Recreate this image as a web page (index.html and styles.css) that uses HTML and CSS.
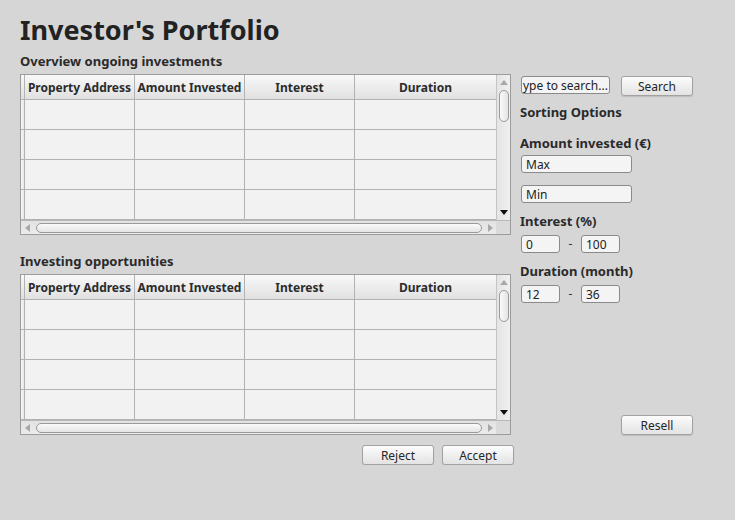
FILE: index.html
```
<!DOCTYPE html>
<html>
<head>
<meta charset="utf-8">
<link rel="stylesheet" href="styles.css">
</head>
<body>
<div class="page">
  <h1 class="title">Investor's Portfolio</h1>
  <div class="main">
    <div class="left">
      <div class="label">Overview ongoing investments</div>
      <div class="table">
        <div class="tbl-main">
          <div class="grid">
            <div class="rh head"></div><div class="hc">Property Address</div><div class="hc">Amount Invested</div><div class="hc">Interest</div><div class="hc last">Duration</div>
            <div class="rh"></div><div class="c"></div><div class="c"></div><div class="c"></div><div class="c last"></div>
            <div class="rh"></div><div class="c"></div><div class="c"></div><div class="c"></div><div class="c last"></div>
            <div class="rh"></div><div class="c"></div><div class="c"></div><div class="c"></div><div class="c last"></div>
            <div class="rh"></div><div class="c"></div><div class="c"></div><div class="c"></div><div class="c last"></div>
          </div>
          <div class="vscroll">
            <svg class="arr-up" width="8" height="5" viewBox="0 0 8 5"><polygon points="4,0 8,5 0,5" fill="#a8a8a8"/></svg>
            <div class="vhandle"></div>
            <svg class="arr-down" width="8" height="5" viewBox="0 0 8 5"><polygon points="0,0 8,0 4,5" fill="#111"/></svg>
          </div>
        </div>
        <div class="tbl-bottom">
          <div class="hscroll">
            <svg class="arr-left" width="5" height="8" viewBox="0 0 5 8"><polygon points="5,0 5,8 0,4" fill="#a8a8a8"/></svg>
            <div class="hhandle"></div>
            <svg class="arr-right" width="5" height="8" viewBox="0 0 5 8"><polygon points="0,0 5,4 0,8" fill="#a8a8a8"/></svg>
          </div>
          <div class="corner"></div>
        </div>
      </div>

      <div class="label label2">Investing opportunities</div>
      <div class="table">
        <div class="tbl-main">
          <div class="grid">
            <div class="rh head"></div><div class="hc">Property Address</div><div class="hc">Amount Invested</div><div class="hc">Interest</div><div class="hc last">Duration</div>
            <div class="rh"></div><div class="c"></div><div class="c"></div><div class="c"></div><div class="c last"></div>
            <div class="rh"></div><div class="c"></div><div class="c"></div><div class="c"></div><div class="c last"></div>
            <div class="rh"></div><div class="c"></div><div class="c"></div><div class="c"></div><div class="c last"></div>
            <div class="rh"></div><div class="c"></div><div class="c"></div><div class="c"></div><div class="c last"></div>
          </div>
          <div class="vscroll">
            <svg class="arr-up" width="8" height="5" viewBox="0 0 8 5"><polygon points="4,0 8,5 0,5" fill="#a8a8a8"/></svg>
            <div class="vhandle"></div>
            <svg class="arr-down" width="8" height="5" viewBox="0 0 8 5"><polygon points="0,0 8,0 4,5" fill="#111"/></svg>
          </div>
        </div>
        <div class="tbl-bottom">
          <div class="hscroll">
            <svg class="arr-left" width="5" height="8" viewBox="0 0 5 8"><polygon points="5,0 5,8 0,4" fill="#a8a8a8"/></svg>
            <div class="hhandle"></div>
            <svg class="arr-right" width="5" height="8" viewBox="0 0 5 8"><polygon points="0,0 5,4 0,8" fill="#a8a8a8"/></svg>
          </div>
          <div class="corner"></div>
        </div>
      </div>

      <div class="btn-row">
        <div class="btn">Reject</div>
        <div class="btn">Accept</div>
      </div>
    </div>

    <div class="right">
      <div class="search-row">
        <div class="field search-field">ype to search...</div>
        <div class="btn">Search</div>
      </div>
      <div class="label sort-title">Sorting Options</div>
      <div class="label amount-label">Amount invested (€)</div>
      <div class="field wide f-max">Max</div>
      <div class="field wide f-min">Min</div>
      <div class="label range-label">Interest (%)</div>
      <div class="range-row">
        <div class="field small">0</div>
        <span class="dash">-</span>
        <div class="field small">100</div>
      </div>
      <div class="label range-label">Duration (month)</div>
      <div class="range-row">
        <div class="field small">12</div>
        <span class="dash">-</span>
        <div class="field small">36</div>
      </div>
      <div class="btn resell">Resell</div>
    </div>
  </div>
</div>
</body>
</html>
```

FILE: styles.css
```
* { box-sizing: border-box; }

body {
  margin: 0;
  background: #d6d6d6;
  font-family: "Noto Sans", "Open Sans", sans-serif;
  color: #262626;
}

.page {
  padding: 12px 20px 0 20px;
}

.title {
  margin: 0;
  font-size: 27px;
  line-height: 36px;
  font-weight: 700;
  color: #222;
}

.main {
  display: flex;
  margin-top: 4px;
}

.left {
  width: 491px;
  display: flex;
  flex-direction: column;
}

.label {
  font-size: 13px;
  line-height: 19px;
  font-weight: 700;
  color: #2a2a2a;
  white-space: nowrap;
}

.label2 { margin-top: 17px; }

.table {
  margin-top: 3px;
  width: 491px;
  height: 161px;
  border: 1px solid #9c9c9c;
  background: #f2f2f2;
  display: flex;
  flex-direction: column;
}

.tbl-main {
  display: flex;
  height: 145px;
}

.grid {
  display: grid;
  grid-template-columns: 4px 110px 110px 110px 141px;
  grid-template-rows: 25px 30px 30px 30px 30px;
}

.grid > div {
  border-right: 1px solid #b2b2b2;
  border-bottom: 1px solid #b2b2b2;
}

.grid > .last { border-right: none; }

.rh {
  background: linear-gradient(to right, #f7f7f7, #e6e6e6);
}

.rh.head {
  background: linear-gradient(#f8f8f8, #e0e0e0);
}

.hc {
  background: linear-gradient(#f8f8f8, #e1e1e1);
  font-size: 12px;
  font-weight: 700;
  color: #2b2b2b;
  display: flex;
  align-items: center;
  justify-content: center;
  white-space: nowrap;
  line-height: 16px;
  padding-top: 1px;
}

.c { background: #f2f2f2; }

.vscroll {
  width: 14px;
  height: 145px;
  border-left: 1px solid #c4c4c4;
  background: linear-gradient(to right, #e4e4e4, #f0f0f0);
  display: flex;
  flex-direction: column;
  align-items: center;
}

.arr-up { margin-top: 5px; display: block; }

.vhandle {
  margin-top: 5px;
  width: 10px;
  height: 32px;
  border: 1px solid #9a9a9a;
  border-radius: 5px;
  background: linear-gradient(to right, #fafafa, #e4e4e4);
}

.arr-down { margin-top: auto; margin-bottom: 5px; display: block; }

.tbl-bottom {
  display: flex;
  height: 14px;
  border-top: 1px solid #b8b8b8;
}

.hscroll {
  width: 475px;
  height: 13px;
  background: linear-gradient(#e2e2e2, #ececec);
  display: flex;
  align-items: center;
}

.arr-left { margin-left: 4px; display: block; }

.hhandle {
  margin-left: 6px;
  width: 446px;
  height: 10px;
  border: 1px solid #9a9a9a;
  border-radius: 5px;
  background: linear-gradient(#fafafa, #e4e4e4);
}

.arr-right { margin-left: 6px; display: block; }

.corner {
  width: 14px;
  height: 13px;
  background: #dadada;
}

.btn-row {
  display: flex;
  justify-content: flex-end;
  gap: 8px;
  margin-top: 10px;
  margin-right: -3px;
}

.btn {
  width: 72px;
  height: 20px;
  border: 1px solid #a2a2a2;
  border-radius: 3px;
  background: linear-gradient(#fcfcfc, #e3e3e3);
  box-shadow: 0 1px 1px rgba(0, 0, 0, 0.12);
  font-size: 12px;
  line-height: 18px;
  padding-top: 1px;
  text-align: center;
  color: #262626;
}

.right {
  margin-left: 9px;
  display: flex;
  flex-direction: column;
  align-items: flex-start;
}

.search-row {
  display: flex;
  align-items: flex-start;
  margin-top: 24px;
  margin-left: 1px;
}

.field {
  height: 18px;
  border: 1px solid #8a8a8a;
  border-radius: 3px;
  background: #f4f4f4;
  font-size: 12px;
  line-height: 16px;
  padding-top: 1px;
  padding-left: 4px;
  color: #222;
  white-space: nowrap;
}

.search-field {
  width: 89px;
  margin-right: 11px;
  padding-left: 1px;
}

.sort-title { margin-top: 7px; }
.amount-label { margin-top: 12px; }

.wide {
  width: 111px;
  margin-left: 1px;
}

.f-max { margin-top: 2px; }
.f-min { margin-top: 12px; }

.range-label { margin-top: 9px; }

.range-row {
  display: flex;
  align-items: center;
  margin-top: 4px;
  margin-left: 1px;
}

.small { width: 39px; }

.dash {
  width: 21px;
  text-align: center;
  font-size: 12px;
  line-height: 16px;
  color: #333;
}

.resell {
  margin-top: 112px;
  margin-left: 101px;
}
```
